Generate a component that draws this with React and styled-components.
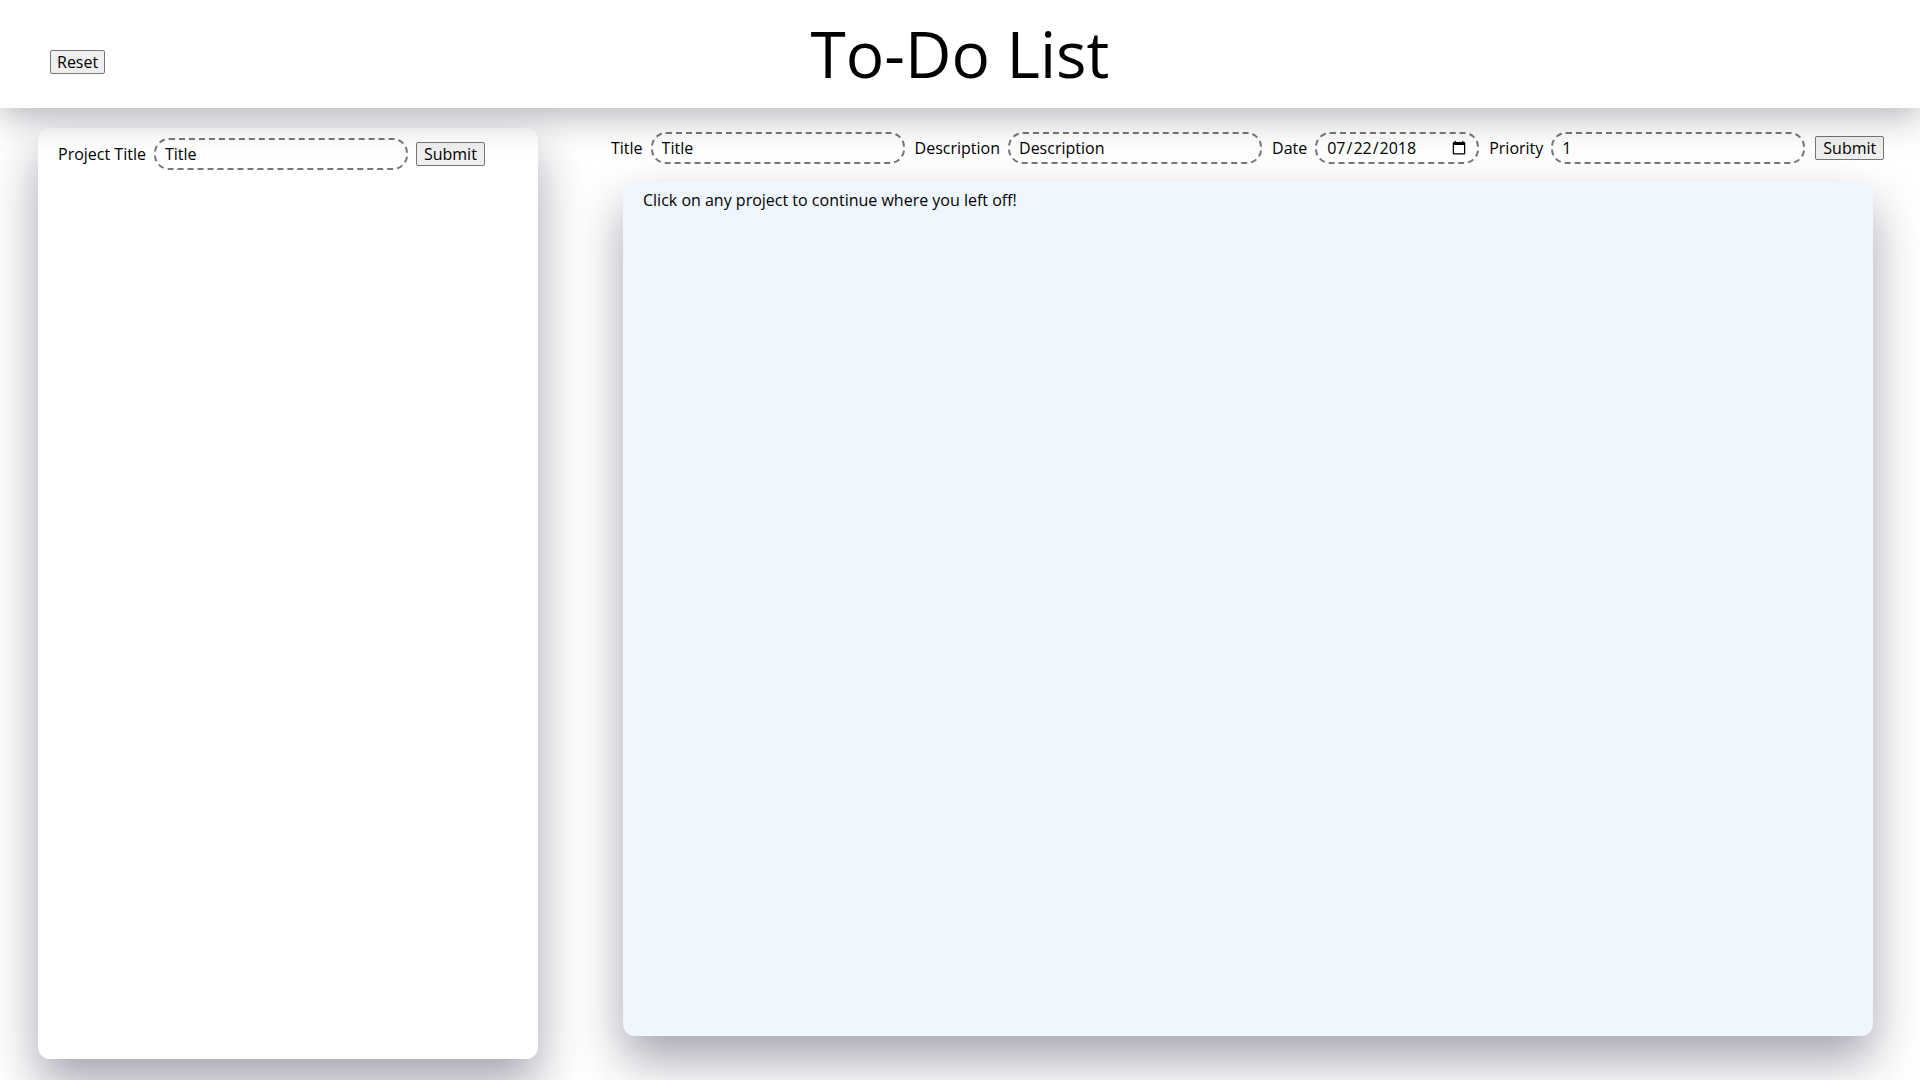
import React from 'react';
import styled, { createGlobalStyle } from 'styled-components';

const GlobalStyle = createGlobalStyle`
  html, body { margin: 0; padding: 0; background: #fff; }
  body {
    font-family: "Open Sans", "Noto Sans", sans-serif;
    color: #000;
    overflow: hidden;
  }
`;

const Header = styled.header`
  position: relative;
  z-index: 2;
  height: 108px;
  background: #fff;
  display: grid;
  grid-template-columns: 1fr auto 1fr;
  align-items: center;
  box-shadow: 0 8px 34px rgba(20, 20, 40, 0.32);
`;

const Title = styled.h1`
  margin: 0;
  font-size: 64px;
  font-weight: 400;
  line-height: 1;
`;

const Button = styled.button`
  font-family: "Open Sans", "Noto Sans", sans-serif;
  font-size: 16px;
  color: #000;
  background: #efefef;
  border: 1px solid #767676;
  border-radius: 2px;
  height: 24px;
  padding: 0 7px;
  line-height: 20px;
  cursor: pointer;
`;

const ResetButton = styled(Button)`
  justify-self: start;
  margin-left: 50px;
  margin-top: 16px;
  padding: 0 6px;
`;

const Main = styled.main`
  display: flex;
  align-items: flex-start;
  gap: 73px;
  padding: 20px 0 21px 38px;
`;

const Card = styled.section`
  box-sizing: border-box;
  border-radius: 12px;
  box-shadow: 0 24px 48px rgba(30, 30, 60, 0.4);
`;

const ProjectPanel = styled(Card)`
  width: 500px;
  height: 931px;
  background: #fff;
  padding: 10px 20px;
`;

const Form = styled.form`
  display: flex;
  align-items: center;
  gap: ${p => p.$gap || 8}px;
`;

const Field = styled.label`
  display: flex;
  align-items: center;
  gap: 8px;
  font-size: 16px;
  white-space: nowrap;
`;

const Input = styled.input`
  box-sizing: border-box;
  width: ${p => p.$w || 254}px;
  height: 32px;
  border: 2px dashed #777;
  border-radius: 15px;
  background: #fff;
  padding: 0 8px 0 9px;
  font-family: "Open Sans", "Noto Sans", sans-serif;
  font-size: 16px;
  color: #000;
  outline: none;
`;

const RightColumn = styled.div`
  display: flex;
  flex-direction: column;
  gap: 18px;
  padding-top: 4px;
`;

const TodoBoard = styled(Card)`
  margin-left: 12px;
  width: 1250px;
  height: 854px;
  background: #eff6fe;
  padding: 7px 20px;
`;

const Hint = styled.p`
  margin: 0;
  font-size: 16px;
  line-height: 22px;
`;

export default function App() {
  return (
    <>
      <GlobalStyle />
      <Header>
        <ResetButton type="button">Reset</ResetButton>
        <Title>To-Do List</Title>
        <span />
      </Header>
      <Main>
        <ProjectPanel>
          <Form onSubmit={e => e.preventDefault()}>
            <Field>
              Project Title
              <Input type="text" placeholder="Title" defaultValue="Title" />
            </Field>
            <Button type="submit">Submit</Button>
          </Form>
        </ProjectPanel>
        <RightColumn>
          <Form $gap={10} onSubmit={e => e.preventDefault()}>
            <Field>
              Title
              <Input type="text" defaultValue="Title" />
            </Field>
            <Field>
              Description
              <Input type="text" defaultValue="Description" />
            </Field>
            <Field>
              Date
              <Input type="date" $w={164} defaultValue="2018-07-22" />
            </Field>
            <Field>
              Priority
              <Input type="number" defaultValue="1" />
            </Field>
            <Button type="submit">Submit</Button>
          </Form>
          <TodoBoard>
            <Hint>Click on any project to continue where you left off!</Hint>
          </TodoBoard>
        </RightColumn>
      </Main>
    </>
  );
}
